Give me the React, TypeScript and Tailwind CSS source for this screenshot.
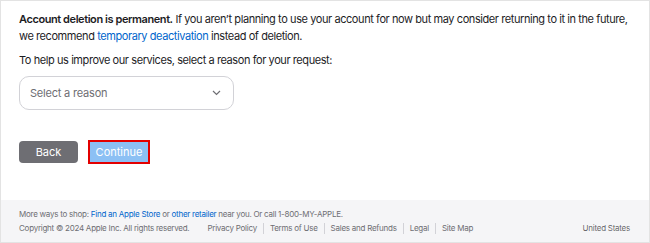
export default function App() {
  const links = ['Privacy Policy', 'Terms of Use', 'Sales and Refunds', 'Legal', 'Site Map']
  return (
    <div className="flex h-[243px] w-[650px] flex-col border border-[#e3e3e3] bg-white font-['Inter',sans-serif] text-[#1d1d1f]">
      <main className="flex-1 pl-[18px] pr-[12px] pt-[10px]">
        <p className="text-[11px] leading-[17px] tracking-[-0.42px]">
          <span className="font-semibold">Account deletion is permanent.</span> If you aren’t planning to use your account for now but may consider returning to it in the future, we recommend{' '}
          <a className="text-[#0066cc]">temporary deactivation</a> instead of deletion.
        </p>
        <p className="mt-[7px] text-[11px] leading-[17px] tracking-[-0.42px]">
          To help us improve our services, select a reason for your request:
        </p>
        <div className="mt-[7px] flex h-[34px] w-[215px] items-center justify-between rounded-[10px] border border-[#d2d2d7] pl-[10px] pr-[12px] text-[11px] tracking-[-0.2px] text-[#6e6e73]">
          <span>Select a reason</span>
          <svg width="9" height="6" viewBox="0 0 9 6" fill="none" stroke="#6e6e73" strokeWidth="1.2">
            <path d="M1 1l3.5 3.5L8 1" />
          </svg>
        </div>
        <div className="mt-[30px] flex items-center gap-[10px]">
          <button className="h-[22px] w-[59px] rounded-[4px] bg-[#6e6e73] text-[11px] text-white">Back</button>
          <div className="border-2 border-[#e30000]">
            <button className="block h-[20px] w-[58px] bg-[#8cc0f4] text-[11px] text-white">Continue</button>
          </div>
        </div>
      </main>
      <footer className="h-[42px] bg-[#f5f5f7] px-[18px] pt-[7px] text-[8px] leading-[14px] tracking-[-0.25px] text-[#6e6e73]">
        <p>
          More ways to shop: <a className="text-[#0066cc]">Find an Apple Store</a> or <a className="text-[#0066cc]">other retailer</a> near you. Or call 1-800-MY-APPLE.
        </p>
        <div className="flex items-center whitespace-nowrap">
          <span className="mr-[12px]">Copyright © 2024 Apple Inc. All rights reserved.</span>
          {links.map((l) => (
            <span key={l} className="flex items-center">
              <span className="px-[6px]">{l}</span>
              {l !== 'Site Map' && <span className="h-[11px] w-px bg-[#d2d2d7]" />}
            </span>
          ))}
          <span className="ml-auto pr-[1px] text-[#1d1d1f]/70">United States</span>
        </div>
      </footer>
    </div>
  )
}
